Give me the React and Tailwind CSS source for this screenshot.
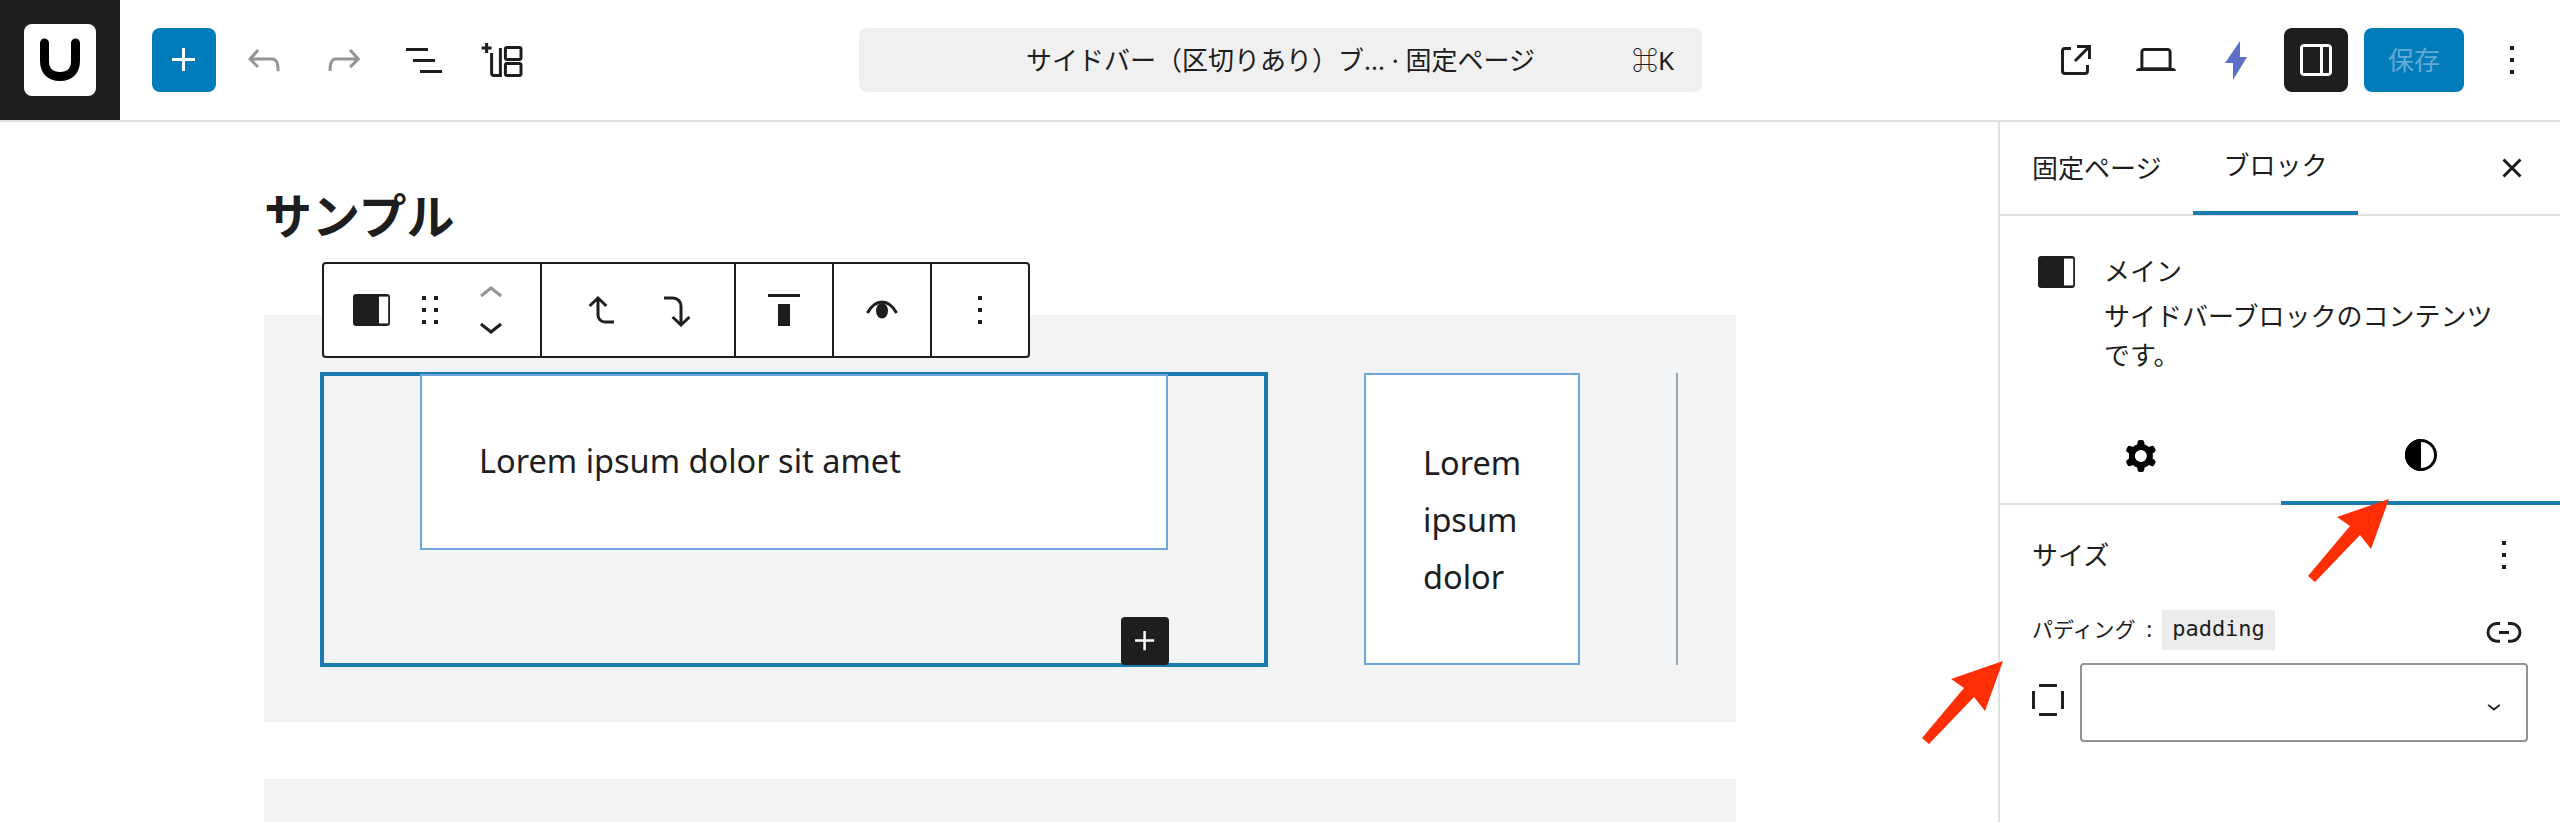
const cjk = { fontFamily: '"Noto Sans", "Noto Sans CJK JP", sans-serif' };

function Icon({ d, className = "fill-[#1e1e1e]", size = "w-12 h-12", evenodd }) {
  return (
    <svg viewBox="0 0 24 24" className={`${size} ${className} shrink-0`}>
      <path d={d} fillRule={evenodd ? "evenodd" : undefined} clipRule={evenodd ? "evenodd" : undefined} />
    </svg>
  );
}

const P = {
  plus: "M11 12.5V17.5H12.5V12.5H17.5V11H12.5V6H11V11H6V12.5H11Z",
  undo: "M18.3 11.7c-.6-.6-1.4-.9-2.3-.9H6.7l2.9-3.3-1.1-1-4.5 5L8.5 16l1-1-2.7-2.7H16c.5 0 .9.2 1.3.5 1 1 1 3.4 1 4.5v.3h1.5v-.2c0-1.5 0-4.3-1.5-5.7z",
  redo: "M15.6 6.5l-1.1 1 2.9 3.3H8c-.9 0-1.7.3-2.3.9-1.4 1.5-1.4 4.2-1.4 5.6v.2h1.5v-.3c0-1.1 0-3.5 1-4.5.3-.3.7-.5 1.3-.5h9.2L14.5 15l1.1 1.1 4.6-4.6-4.6-5z",
  list: "M3 6h11v1.5H3V6Zm3.5 5.5h11V13h-11v-1.5ZM21 17H10v1.5h11V17Z",
  external: "M19.5 4.5h-7V6h4.44l-5.97 5.97 1.06 1.06L18 7.06v4.44h1.5v-7Zm-13 1a2 2 0 0 0-2 2v10a2 2 0 0 0 2 2h10a2 2 0 0 0 2-2v-3H17v3a.5.5 0 0 1-.5.5h-10a.5.5 0 0 1-.5-.5v-10a.5.5 0 0 1 .5-.5h3V5.5h-3Z",
  laptop: "M20.5 16h-.7V8c0-1.1-.9-2-2-2H6.2c-1.1 0-2 .9-2 2v8h-.7c-.8 0-1.5.7-1.5 1.5h20c0-.8-.7-1.5-1.5-1.5zM5.7 8c0-.3.2-.5.5-.5h11.6c.3 0 .5.2.5.5v7.6H5.7V8z",
  drawer: "M18 4H6c-1.1 0-2 .9-2 2v12c0 1.1.9 2 2 2h12c1.1 0 2-.9 2-2V6c0-1.1-.9-2-2-2zm-4 14.5H6c-.3 0-.5-.2-.5-.5V6c0-.3.2-.5.5-.5h8v13zm4.5-.5c0 .3-.2.5-.5.5h-2.5v-13H18c.3 0 .5.2.5.5v12z",
  more: "M13 19h-2v-2h2v2zm0-6h-2v-2h2v2zm0-6h-2V5h2v2z",
  close: "M12 13.06l3.712 3.713 1.061-1.06L13.061 12l3.712-3.712-1.06-1.06L12 10.938 8.288 7.227l-1.061 1.06L10.939 12l-3.712 3.712 1.06 1.061L12 13.061z",
  drag: "M8 7h2V5H8v2zm0 6h2v-2H8v2zm0 6h2v-2H8v2zm6-14v2h2V5h-2zm0 8h2v-2h-2v2zm0 6h2v-2h-2v2z",
  up: "M6.5 12.4L12 8l5.5 4.4-.9 1.2L12 10l-4.5 3.6-1-1.2z",
  down: "M17.5 11.6L12 16l-5.5-4.4.9-1.2L12 14l4.5-3.6 1 1.2z",
  gear: "M10.289 4.836A1 1 0 0 1 11.275 4h1.306a1 1 0 0 1 .987.836l.244 1.466c.787.26 1.503.679 2.108 1.218l1.393-.522a1 1 0 0 1 1.216.437l.653 1.13a1 1 0 0 1-.23 1.273l-1.148.944a6.025 6.025 0 0 1 0 2.435l1.149.946a1 1 0 0 1 .23 1.272l-.653 1.13a1 1 0 0 1-1.216.437l-1.394-.522c-.605.54-1.32.958-2.108 1.218l-.244 1.466a1 1 0 0 1-.987.836h-1.306a1 1 0 0 1-.986-.836l-.244-1.466a5.995 5.995 0 0 1-2.108-1.218l-1.394.522a1 1 0 0 1-1.217-.436l-.653-1.131a1 1 0 0 1 .23-1.272l1.149-.946a6.026 6.026 0 0 1 0-2.435l-1.148-.944a1 1 0 0 1-.23-1.272l.653-1.131a1 1 0 0 1 1.217-.437l1.393.522a5.994 5.994 0 0 1 2.108-1.218l.244-1.466ZM14.929 12a3 3 0 1 1-6 0 3 3 0 0 1 6 0Z",
  link: "M10 17.389H8.444A5.194 5.194 0 1 1 8.444 7H10v1.5H8.444a3.694 3.694 0 0 0 0 7.389H10v1.5ZM14 7h1.556a5.194 5.194 0 0 1 0 10.39H14v-1.5h1.556a3.694 3.694 0 0 0 0-7.39H14V7Zm-4.5 6h5v-1.5h-5V13Z",
  sides: "M7.5 4h9v1.5h-9zM7.5 18.5h9V20h-9zM4 7.5h1.5v9H4zM18.5 7.5H20v9h-1.5z",
  top: "M9 20h6V9H9v11zM4 4v1.5h16V4H4z",
};

function Btn({ children, className = "" }) {
  return <div className={`w-16 h-16 rounded-lg flex items-center justify-center shrink-0 ${className}`}>{children}</div>;
}

function ColumnsIcon() {
  return (
    <svg viewBox="0 0 24 24" className="w-12 h-12 shrink-0">
      <rect x="2.5" y="4" width="18.5" height="16" rx="1.6" fill="#1e1e1e" />
      <rect x="15.5" y="5.3" width="4.6" height="13.4" fill="#fff" />
    </svg>
  );
}

function PatternsIcon() {
  return (
    <svg viewBox="0 0 24 24" className="w-12 h-12 shrink-0" fill="none" stroke="#1e1e1e" strokeWidth="1.5">
      <path d="M3.3 3.500v5M.8 6h5" />
      <path d="M5.800 8.500V18.500c0 .7.4 1.200 1.200 1.200h3.200V6" />
      <rect x="12.700" y="5.700" width="7.800" height="6" rx=".8" />
      <rect x="12.700" y="13.700" width="7.800" height="6" rx=".8" />
    </svg>
  );
}

function Bolt() {
  return (
    <svg viewBox="0 0 24 24" className="w-12 h-12 shrink-0">
      <path d="M14 2.500 6.500 13.500h4V22l7-11.500H14Z" fill="#5b6fc9" />
    </svg>
  );
}

function Logo() {
  return (
    <div className="w-[120px] h-full bg-[#1e1e1e] flex items-center justify-center shrink-0">
      <div className="w-[72px] h-[72px] rounded-lg bg-white flex items-center justify-center">
        <svg viewBox="0 0 48 48" className="w-12 h-12">
          <path d="M8.500 7v18c0 10 6 15.500 15.500 15.500S39.500 35 39.500 25V7" fill="none" stroke="#000" strokeWidth="9" strokeLinecap="round" />
        </svg>
      </div>
    </div>
  );
}

function Header() {
  return (
    <header className="h-[122px] shrink-0 flex border-b-2 border-[#e0e0e0] bg-white">
      <Logo />
      <div className="w-[739px] flex items-center gap-4 pl-8 shrink-0 box-border h-[120px]">
        <Btn className="bg-[#007cba]"><Icon d={P.plus} className="fill-white" /></Btn>
        <Btn><Icon d={P.undo} className="fill-[#949494]" /></Btn>
        <Btn><Icon d={P.redo} className="fill-[#949494]" /></Btn>
        <Btn><Icon d={P.list} /></Btn>
        <Btn><PatternsIcon /></Btn>
      </div>
      <div className="h-[120px] flex items-center shrink-0">
        <div className="w-[843px] h-16 rounded-lg bg-[#f0f0f0] flex items-center text-[26px] text-[#1e1e1e] relative" style={cjk}>
          <span className="w-full text-center">サイドバー（区切りあり）ブ... · 固定ページ</span>
          <span className="absolute right-[28px]">⌘K</span>
        </div>
      </div>
      <div className="flex-1 h-[120px] flex items-center justify-end gap-4 pr-4">
        <Btn><Icon d={P.external} /></Btn>
        <Btn><Icon d={P.laptop} /></Btn>
        <Btn><Bolt /></Btn>
        <Btn className="bg-[#1e1e1e]"><Icon d={P.drawer} className="fill-white" /></Btn>
        <div className="w-[100px] h-16 rounded-lg bg-[#007cba] text-[#66a9d6] text-[26px] flex items-center justify-center shrink-0" style={cjk}>保存</div>
        <Btn><Icon d={P.more} /></Btn>
      </div>
    </header>
  );
}

function Toolbar() {
  return (
    <div className="absolute left-[58px] top-[-53px] h-[96px] w-[708px] flex bg-white border-2 border-[#1e1e1e] rounded-[4px] box-border">
      <div className="w-[218px] flex items-center pl-[24px] border-r-2 border-[#1e1e1e] box-border">
        <ColumnsIcon />
        <div className="ml-[10px]"><Icon d={P.drag} /></div>
        <div className="ml-[13px] flex flex-col">
          <div className="h-[32px] flex items-center justify-center"><Icon d={P.up} className="fill-[#949494]" /></div>
          <div className="h-[32px] flex items-center justify-center"><Icon d={P.down} /></div>
        </div>
      </div>
      <div className="w-[194px] flex items-center justify-center gap-[29px] border-r-2 border-[#1e1e1e] box-border">
        <svg viewBox="0 0 24 24" className="w-12 h-12" fill="none" stroke="#1e1e1e" strokeWidth="1.5">
          <path d="M11 6v8.500a3.500 3.500 0 0 0 3.500 3.500H19M6.800 10 11 6l4.200 4" />
        </svg>
        <svg viewBox="0 0 24 24" className="w-12 h-12" fill="none" stroke="#1e1e1e" strokeWidth="1.5">
          <path d="M5.500 6H10a4 4 0 0 1 4 4v9.500M9.800 15.500l4.200 4 4.200-4" />
        </svg>
      </div>
      <div className="w-[98px] flex items-center justify-center border-r-2 border-[#1e1e1e] box-border"><Icon d={P.top} /></div>
      <div className="w-[98px] flex items-center justify-center border-r-2 border-[#1e1e1e] box-border">
        <svg viewBox="0 0 24 24" className="w-12 h-12">
          <path d="M4.700 13.500C7 9.300 9.500 8 12 8s5 1.300 7.300 5.500" fill="none" stroke="#1e1e1e" strokeWidth="1.500" />
          <ellipse cx="12" cy="12.400" rx="3" ry="3.900" fill="#1e1e1e" />
        </svg>
      </div>
      <div className="flex-1 flex items-center justify-center"><Icon d={P.more} /></div>
    </div>
  );
}

function Editor() {
  const lorem = { fontFamily: '"Noto Sans", sans-serif' };
  return (
    <main className="w-[2000px] h-[700px] shrink-0 border-r-2 border-[#e0e0e0] box-border pl-[264px] pr-[262px] overflow-hidden">
      <h1 className="text-[48px] font-bold text-[#1e1e1e] leading-[70px] pt-[56px]" style={{ fontFamily: '"Noto Sans CJK JP", sans-serif' }}>サンプル</h1>
      <div className="relative mt-[67px] h-[407px] bg-[#f2f3f5] flex pt-[57px] pl-[56px] box-border leading-[57px] text-[#1e1e1e]" style={lorem}>
        <Toolbar />
        <div className="relative w-[948px] h-[295px] border-[4px] border-[#1a7bb0] box-border shrink-0">
          <div className="ml-[96px] -mt-[2px] w-[748px] h-[176px] bg-white border-2 border-[#6ca6dc] box-border pl-[57px] pt-[56px] text-[32.5px]">Lorem ipsum dolor sit amet</div>
          <div className="absolute right-[95px] bottom-[-2px] w-12 h-12 bg-[#1e1e1e] rounded-[4px] flex items-center justify-center">
            <Icon d={P.plus} className="fill-white" size="w-10 h-10" />
          </div>
        </div>
        <div className="ml-[96px] w-[216px] h-[292px] mt-[1px] bg-white border-2 border-[#6ca6dc] box-border pl-[57px] pt-[59px] text-[32.5px] shrink-0">
          Lorem<br />ipsum<br />dolor
        </div>
        <div className="ml-[96px] w-[2px] h-[292px] mt-[1px] bg-[#9ca3af]" />
      </div>
      <div className="mt-[57px] h-[60px] bg-[#f2f3f5]" />
    </main>
  );
}

function Sidebar() {
  return (
    <aside className="flex-1 text-[#1e1e1e] text-[26px]" style={cjk}>
      <div className="h-[94px] relative flex items-center border-b-2 border-[#e0e0e0] box-border">
        <div className="pl-[32px] w-[193px] leading-[92px]">固定ページ</div>
        <div className="w-[165px] h-[94px] border-b-4 border-[#1a7bb0] text-center leading-[88px] box-border">ブロック</div>
        <div className="ml-auto mr-[16px] w-16 h-16 flex items-center justify-center"><Icon d={P.close} /></div>
      </div>
      <div className="flex pl-[32px] pt-[32px] h-[192px] box-border">
        <div className="w-[72px] pl-[1px]"><ColumnsIcon /></div>
        <div className="leading-[39px] w-[400px]">
          <div className="h-[49px] pt-[4px]">メイン</div>
          <div>サイドバーブロックのコンテンツです。</div>
        </div>
      </div>
      <div className="flex h-[97px] border-b-2 border-[#e0e0e0] box-border">
        <div className="w-[281px] flex items-center justify-center"><Icon d={P.gear} className="fill-black" evenodd /></div>
        <div className="flex-1 h-[97px] border-b-4 border-[#1a7bb0] flex items-center justify-center box-border">
          <svg viewBox="0 0 24 24" className="w-12 h-12">
            <circle cx="12" cy="12" r="7.250" fill="#fff" stroke="#000" strokeWidth="1.5" />
            <path d="M12 4a8 8 0 0 0 0 16Z" fill="#000" />
          </svg>
        </div>
      </div>
      <div className="pl-[32px] pr-[32px] pt-[18px]">
        <div className="flex items-center justify-between h-16">
          <span>サイズ</span>
          <Icon d={P.more} />
        </div>
        <div className="flex items-center justify-between mt-[23px] h-[40px]">
          <div className="flex items-center text-[21px]">
            <span className="w-[130px] whitespace-nowrap">パディング&nbsp;&nbsp;:</span>
            <code className="h-[40px] w-[113px] bg-[#ececec] text-[22px] leading-[38px] text-center" style={{ fontFamily: '"DejaVu Sans Mono", monospace' }}>padding</code>
          </div>
          <div className="mt-[3px] h-10 flex items-center"><Icon d={P.link} /></div>
        </div>
        <div className="flex items-center mt-[13px]">
          <div className="-ml-[8px] -mt-[6px]"><Icon d={P.sides} /></div>
          <div className="ml-[8px] w-[448px] h-[79px] border-2 border-[#949494] rounded-[4px] box-border flex items-center justify-end pr-[18px] pt-[6px]">
            <Icon d={P.down} size="w-7 h-7" />
          </div>
        </div>
      </div>
    </aside>
  );
}

function Arrow({ className }) {
  return (
    <svg viewBox="0 0 90 90" className={`absolute w-[90px] h-[90px] ${className}`}>
      <path d="M83 2 65 52 54 38 9 85 2 79 44 29 31 20Z" fill="#ff2e05" />
    </svg>
  );
}

export default function App() {
  return (
    <div className="relative w-[2560px] h-[822px] overflow-hidden bg-white flex flex-col">
      <Header />
      <div className="flex flex-1 min-h-0">
        <Editor />
        <Sidebar />
      </div>
      <Arrow className="left-[1920px] top-[659px]" />
      <Arrow className="left-[2306px] top-[497px]" />
    </div>
  );
}
